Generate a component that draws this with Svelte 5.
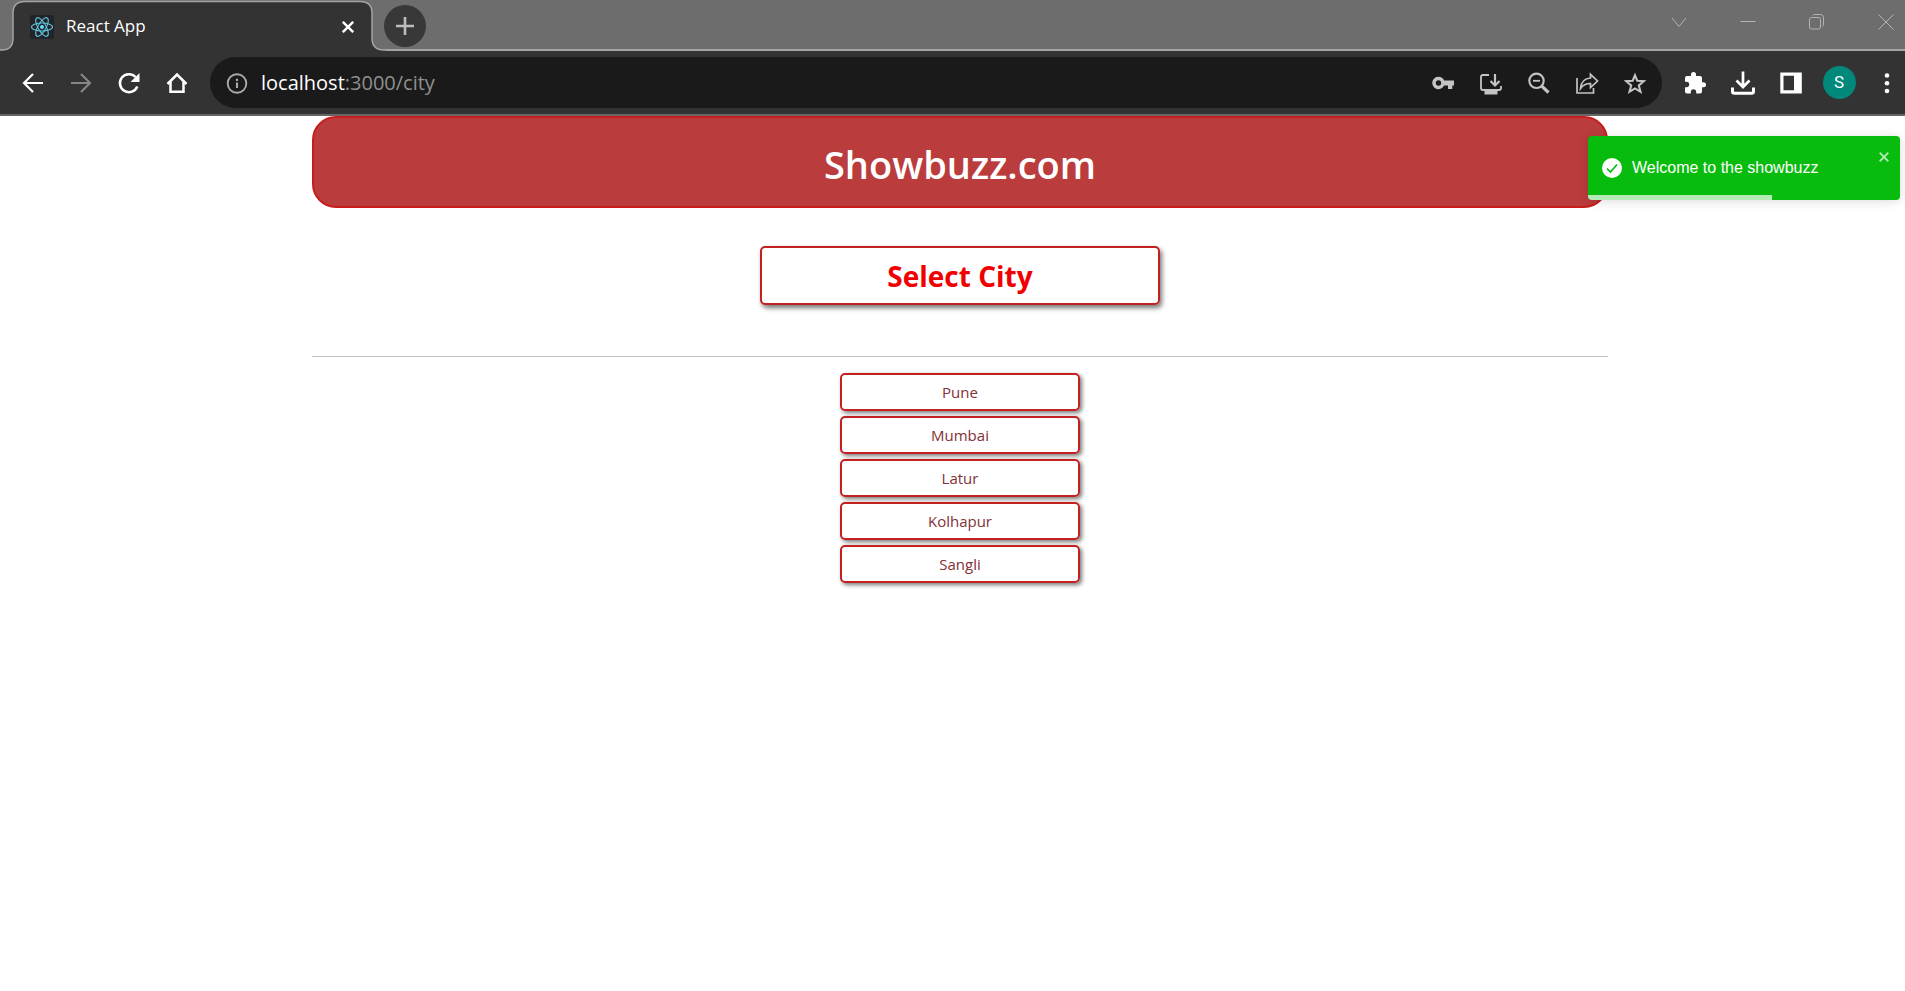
<script>
  const cities = ['Pune', 'Mumbai', 'Latur', 'Kolhapur', 'Sangli'];
  const progress = 59;
</script>

<div class="browser">
  <div class="strip">
    <div class="tab">
      <svg class="shape" width="386" height="51" viewBox="0 0 386 51" aria-hidden="true">
        <path d="M0 51V50Q13 50 13 38V13Q13 1 25 1H360Q372 1 372 13V38Q372 50 384 50H386V51Z" fill="#333" />
        <path d="M0 50H2Q13 50 13 38V13Q13 1.500 25 1.500H360Q372 1.500 372 13V38Q372 50 384 50H386" fill="none" stroke="#a3a3a3" stroke-width="1.500" />
      </svg>
      <svg class="favicon" width="24" height="24" viewBox="0 0 24 24" aria-hidden="true">
        <rect width="24" height="24" rx="2" fill="#212428" />
        <g fill="none" stroke="#61c6e0" stroke-width="1.100">
          <ellipse cx="12" cy="12" rx="10.500" ry="4" />
          <ellipse cx="12" cy="12" rx="10.500" ry="4" transform="rotate(60 12 12)" />
          <ellipse cx="12" cy="12" rx="10.500" ry="4" transform="rotate(120 12 12)" />
        </g>
        <circle cx="12" cy="12" r="2" fill="#61dafb" />
      </svg>
      <span class="tab-title">React App</span>
      <button class="tab-close" aria-label="Close tab">
        <svg width="12" height="12" viewBox="0 0 12 12"><path d="M0.800 0.800L11.200 11.200M11.200 0.800L0.800 11.200" stroke="#fff" stroke-width="2.400" /></svg>
      </button>
    </div>
    <button class="new-tab" aria-label="New tab">
      <svg width="18" height="18" viewBox="0 0 18 18"><path d="M9 0V18M0 9H18" stroke="#bdbdbd" stroke-width="2.600" /></svg>
    </button>
    <div class="window-buttons">
      <button aria-label="Search tabs">
        <svg width="16" height="16" viewBox="0 0 16 16"><path d="M1 4L8 12.500L15 4" /></svg>
      </button>
      <button aria-label="Minimize">
        <svg width="16" height="16" viewBox="0 0 16 16"><path d="M0.500 7.500H15.500" /></svg>
      </button>
      <button aria-label="Restore">
        <svg width="16" height="16" viewBox="0 0 16 16"><rect x="0.500" y="3.500" width="11" height="11.500" rx="2" /><path d="M3.500 1.500Q4 0.500 5.500 0.500H11.500Q14.500 0.500 14.500 4V10Q14.500 12 13.500 12.500" /></svg>
      </button>
      <button aria-label="Close window">
        <svg width="16" height="16" viewBox="0 0 16 16"><path d="M0.500 0.500L15.500 15.500M15.500 0.500L0.500 15.500" /></svg>
      </button>
    </div>
  </div>

  <div class="toolbar">
    <button class="tool" aria-label="Back">
      <svg width="24" height="24" viewBox="0 0 24 24" fill="none" stroke="#fff" stroke-width="2.200"><path d="M22 12H3.500M12 3L3 12L12 21" /></svg>
    </button>
    <button class="tool" aria-label="Forward">
      <svg width="24" height="24" viewBox="0 0 24 24" fill="none" stroke="#868686" stroke-width="2.200"><path d="M2 12H20.500M12 3L21 12L12 21" /></svg>
    </button>
    <button class="tool" aria-label="Reload">
      <svg width="24" height="24" viewBox="0 0 24 24"><path d="M20.300 15.500A9 9 0 1 1 18.500 6" fill="none" stroke="#fff" stroke-width="2.500" /><path d="M22.500 2V11H13.500Z" fill="#fff" /></svg>
    </button>
    <button class="tool" aria-label="Home">
      <svg width="24" height="24" viewBox="0 0 24 24" fill="none" stroke="#fff" stroke-width="2.500"><path d="M2.500 13L12 3.500L21.500 13" /><path d="M5.500 10.500V20.800H18.500V10.500" /></svg>
    </button>

    <div class="address">
      <button class="tool" aria-label="Site information">
        <svg width="24" height="24" viewBox="0 0 24 24"><circle cx="12" cy="12.500" r="9.300" fill="none" stroke="#a8abad" stroke-width="1.900" /><path d="M12 11.500V17M12 7.800V10" stroke="#a8abad" stroke-width="2.100" /></svg>
      </button>
      <div class="url" role="textbox" tabindex="0" contenteditable="true" aria-label="Address"><span>localhost</span>:3000/city</div>
      <button class="tool" aria-label="Passwords">
        <svg width="24" height="24" viewBox="0 0 24 24"><path fill-rule="evenodd" d="M7.500 5.800A6.200 6.200 0 1 0 13.100 14.500H17V18H21.300V14.500H23V9.500H13.100A6.200 6.200 0 0 0 7.500 5.800ZM7.500 9.300A2.700 2.700 0 1 1 7.500 14.700A2.700 2.700 0 0 1 7.500 9.300Z" fill="#c4c4c4" /></svg>
      </button>
      <button class="tool" aria-label="Install app">
        <svg width="24" height="24" viewBox="0 0 24 24" fill="none" stroke="#c4c4c4" stroke-width="1.800"><path d="M10 4H4Q2 4 2 6V17Q2 19 4 19H20Q22 19 22 17V15" /><path d="M16 3V14M11.500 10L16 14.500L20.500 10" stroke-width="2.200" /><path d="M5.500 21.500H18.500" stroke-width="4" /></svg>
      </button>
      <button class="tool" aria-label="Zoom">
        <svg width="24" height="24" viewBox="0 0 24 24" fill="none" stroke="#c4c4c4"><circle cx="9.500" cy="9.800" r="7.200" stroke-width="2.100" /><path d="M6 9.800H13" stroke-width="1.800" /><path d="M14.500 14.800L21.500 21.500" stroke-width="3.200" /></svg>
      </button>
      <button class="tool" aria-label="Share">
        <svg width="24" height="24" viewBox="0 0 24 24" fill="none" stroke="#c4c4c4" stroke-width="1.700"><path d="M2 7V22H18.500V17" /><path d="M5.500 17.500C6 11 9.500 7.500 15.500 7V3.300L22.500 10L15.500 16.500V12.500C11 12.500 8 14 5.500 17.500Z" /></svg>
      </button>
      <button class="tool" aria-label="Bookmark">
        <svg width="24" height="24" viewBox="0 0 24 24" fill="none" stroke="#c4c4c4" stroke-width="2.100"><path d="M12 4.300L14.300 9.700L20.800 10.200L15.800 14.400L17.500 20.800L12 17.400L6.500 20.800L8.200 14.400L3.200 10.200L9.700 9.700Z" /></svg>
      </button>
    </div>

    <button class="tool" aria-label="Extensions">
      <svg width="24" height="24" viewBox="0 0 24 24"><path d="M20.500 11.300H19V7Q19 5 17 5H13V3.500A2.500 2.500 0 0 0 8 3.500V5H4Q2 5 2 7V10.800H3.500A2.700 2.700 0 0 1 3.500 16.200H2V20.500Q2 22.500 4 22.500H7.800V21A2.700 2.700 0 0 1 13.200 21V22.500H17Q19 22.500 19 20.500V16.300H20.500A2.500 2.500 0 0 0 20.500 11.300Z" fill="#fff" /></svg>
    </button>
    <button class="tool" aria-label="Downloads">
      <svg width="24" height="24" viewBox="0 0 24 24" fill="none" stroke="#fff" stroke-width="3"><path d="M12 0.500V15M5.500 9.500L12 16L18.500 9.500" stroke-width="2.700" /><path d="M1.500 16.500V20.500Q1.500 22.300 3.500 22.300H20.500Q22.500 22.300 22.500 20.500V16.500" /></svg>
    </button>
    <button class="tool" aria-label="Side panel">
      <svg width="24" height="24" viewBox="0 0 24 24"><path fill-rule="evenodd" d="M1.300 1.500H22.800V22.500H1.300ZM4.500 4.800V19.200H15V4.800Z" fill="#fff" /></svg>
    </button>
    <button class="tool" aria-label="Profile"><span class="avatar">S</span></button>
    <button class="tool menu" aria-label="Menu">
      <svg width="24" height="24" viewBox="0 0 24 24" fill="#fff"><circle cx="12" cy="4.500" r="2.300" /><circle cx="12" cy="12.300" r="2.300" /><circle cx="12" cy="20" r="2.300" /></svg>
    </button>
  </div>
</div>

<main>
  <div class="container">
    <header><h1>Showbuzz.com</h1></header>
    <h2>Select City</h2>
    <hr />
    <nav aria-label="Cities">
      {#each cities as city}
        <a href="#{city}">{city}</a>
      {/each}
    </nav>
  </div>

  <div class="toast" role="alert">
    <svg width="20" height="20" viewBox="0 0 20 20" aria-hidden="true"><circle cx="10" cy="10" r="10" fill="#fff" /><path d="M5 10.500L8.500 14L15 6.500" fill="none" stroke="#07bc0c" stroke-width="1.700" /></svg>
    <span>Welcome to the showbuzz</span>
    <button aria-label="Close notification">
      <svg width="10" height="10" viewBox="0 0 10 10"><path d="M0.700 0.700L9.300 9.300M9.300 0.700L0.700 9.300" stroke="#b5ebb6" stroke-width="1.900" /></svg>
    </button>
    <div class="progress" style:width="{progress}%"></div>
  </div>
</main>

<style>
  :global(body) {
    margin: 0;
    background: #fff;
    font-family: "Segoe UI", "Open Sans", sans-serif;
  }
  button {
    display: flex;
    align-items: center;
    justify-content: center;
    padding: 0;
    border: 0;
    background: none;
    font: inherit;
  }
  svg {
    display: block;
    flex: none;
  }
  .strip {
    display: flex;
    height: 51px;
    background: linear-gradient(#a3a3a3, #a3a3a3) bottom / 100% 2px no-repeat, #6d6d6d;
  }
  .tab {
    position: relative;
    display: flex;
    align-items: center;
    box-sizing: border-box;
    width: 372px;
    padding: 2px 18px 0 30px;
  }
  .shape {
    position: absolute;
    top: 0;
    left: 0;
  }
  .favicon,
  .tab-title,
  .tab-close {
    position: relative;
  }
  .tab-title {
    flex: 1;
    margin-left: 12px;
    padding-bottom: 2px;
    color: #fff;
    font-size: 17px;
    line-height: 24px;
  }
  .new-tab {
    width: 42px;
    height: 42px;
    margin: 5px 0 0 12px;
    border-radius: 50%;
    background: #383838;
  }
  .window-buttons {
    display: flex;
    gap: 31px;
    height: 44px;
    margin-left: auto;
  }
  .window-buttons button {
    width: 38px;
  }
  .window-buttons svg {
    fill: none;
    stroke: #b3b3b3;
    stroke-width: 1;
  }
  .toolbar {
    display: flex;
    align-items: center;
    box-sizing: border-box;
    height: 65px;
    padding-left: 9px;
    border-bottom: 2px solid #666;
    background: #333;
  }
  .tool {
    flex: none;
    width: 48px;
    height: 48px;
  }
  .menu {
    box-sizing: border-box;
    width: 42px;
    padding-left: 6px;
  }
  .address {
    display: flex;
    flex: 1;
    align-items: center;
    box-sizing: border-box;
    height: 51px;
    margin: 0 9px;
    padding: 0 3px;
    border-radius: 26px;
    background: #1a1a1a;
  }
  .url {
    flex: 1;
    color: #8f8f8f;
    font-size: 20px;
    line-height: 28px;
  }
  .url span {
    color: #fff;
  }
  .avatar {
    width: 33px;
    height: 33px;
    border-radius: 50%;
    background: #00897b;
    color: #fff;
    font: 17px/33px Roboto, sans-serif;
  }
  main {
    position: relative;
    padding: 0 0 24px 15px;
  }
  .container {
    display: flex;
    flex-direction: column;
    align-items: center;
    max-width: 1296px;
    margin: 0 auto;
  }
  header {
    align-self: stretch;
    box-sizing: border-box;
    padding: 22px 20px 18px;
    border: 2px solid #c71d1d;
    border-radius: 24px;
    background: #bb3c3d;
  }
  h1 {
    margin: 0;
    color: #fff;
    font-size: 38px;
    font-weight: 600;
    line-height: 48px;
    text-align: center;
  }
  h2 {
    box-sizing: border-box;
    width: 400px;
    margin: 38px 0 0;
    padding: 11px 10px 9px;
    border: 2px solid #c32020;
    border-radius: 5px;
    box-shadow: 2px 3px 5px #777;
    color: #f00000;
    font-size: 28px;
    font-weight: 700;
    line-height: 35px;
    text-align: center;
  }
  hr {
    align-self: stretch;
    height: 1px;
    margin: 51px 0 16px;
    border: 0;
    background: #c4c4c4;
  }
  nav {
    display: flex;
    flex-direction: column;
    gap: 5px;
    width: 240px;
  }
  nav a {
    padding: 5px;
    border: 2px solid #c32020;
    border-radius: 5px;
    box-shadow: 2px 2px 4px #777;
    color: #833036;
    font-size: 15px;
    line-height: 24px;
    text-align: center;
    text-decoration: none;
  }
  .toast {
    position: absolute;
    top: 20px;
    right: 5px;
    display: flex;
    align-items: center;
    box-sizing: border-box;
    width: 312px;
    height: 64px;
    padding: 0 11px 0 14px;
    border-radius: 4px;
    overflow: hidden;
    box-shadow: 0 1px 10px rgba(0, 0, 0, 0.1), 0 2px 15px rgba(0, 0, 0, 0.05);
    background: #07bc0c;
    color: #fff;
    font: 16px/24px "Liberation Sans", Arial, sans-serif;
  }
  .toast span {
    flex: 1;
    margin-left: 10px;
  }
  .toast button {
    align-self: flex-start;
    margin-top: 16px;
  }
  .progress {
    position: absolute;
    bottom: 0;
    left: 0;
    height: 5px;
    background: rgba(255, 255, 255, 0.7);
  }
</style>
